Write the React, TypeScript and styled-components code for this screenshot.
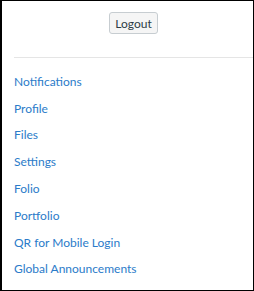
import styled, { createGlobalStyle } from 'styled-components';

const GlobalStyle = createGlobalStyle`
	html, body {
		margin: 0;
		padding: 0;
		background: #fff;
	}
`;

const Tray = styled.div`
	box-sizing: border-box;
	width: 254px;
	height: 291px;
	border-style: solid;
	border-color: #000;
	border-width: 1px 1px 1px 2px;
	padding-left: 12px;
	font-family: Lato, 'Noto Sans', sans-serif;
`;

const Header = styled.div`
	display: flex;
	justify-content: center;
	padding: 11px 0 23px;
	border-bottom: 1px solid #e5e5e5;
`;

const LogoutButton = styled.button`
	height: 22px;
	padding: 0 5px;
	font-family: inherit;
	font-size: 12px;
	color: #2d3b45;
	background: #f5f5f5;
	border: 1px solid #c7cdd1;
	border-radius: 3px;
`;

const LinkList = styled.ul`
	list-style: none;
	margin: 0;
	padding: 10px 0 0;
`;

const LinkItem = styled.li`
	height: 26.8px;
	display: flex;
	align-items: center;
`;

const TrayLink = styled.a`
	font-size: 12px;
	color: #2b7bc9;
	text-decoration: none;
`;

const links = [
	'Notifications',
	'Profile',
	'Files',
	'Settings',
	'Folio',
	'Portfolio',
	'QR for Mobile Login',
	'Global Announcements',
];

export default function App() {
	return (
		<>
			<GlobalStyle />
			<Tray>
				<Header>
					<LogoutButton type="button">Logout</LogoutButton>
				</Header>
				<LinkList>
					{links.map((label) => (
						<LinkItem key={label}>
							<TrayLink href="#">{label}</TrayLink>
						</LinkItem>
					))}
				</LinkList>
			</Tray>
		</>
	);
}
